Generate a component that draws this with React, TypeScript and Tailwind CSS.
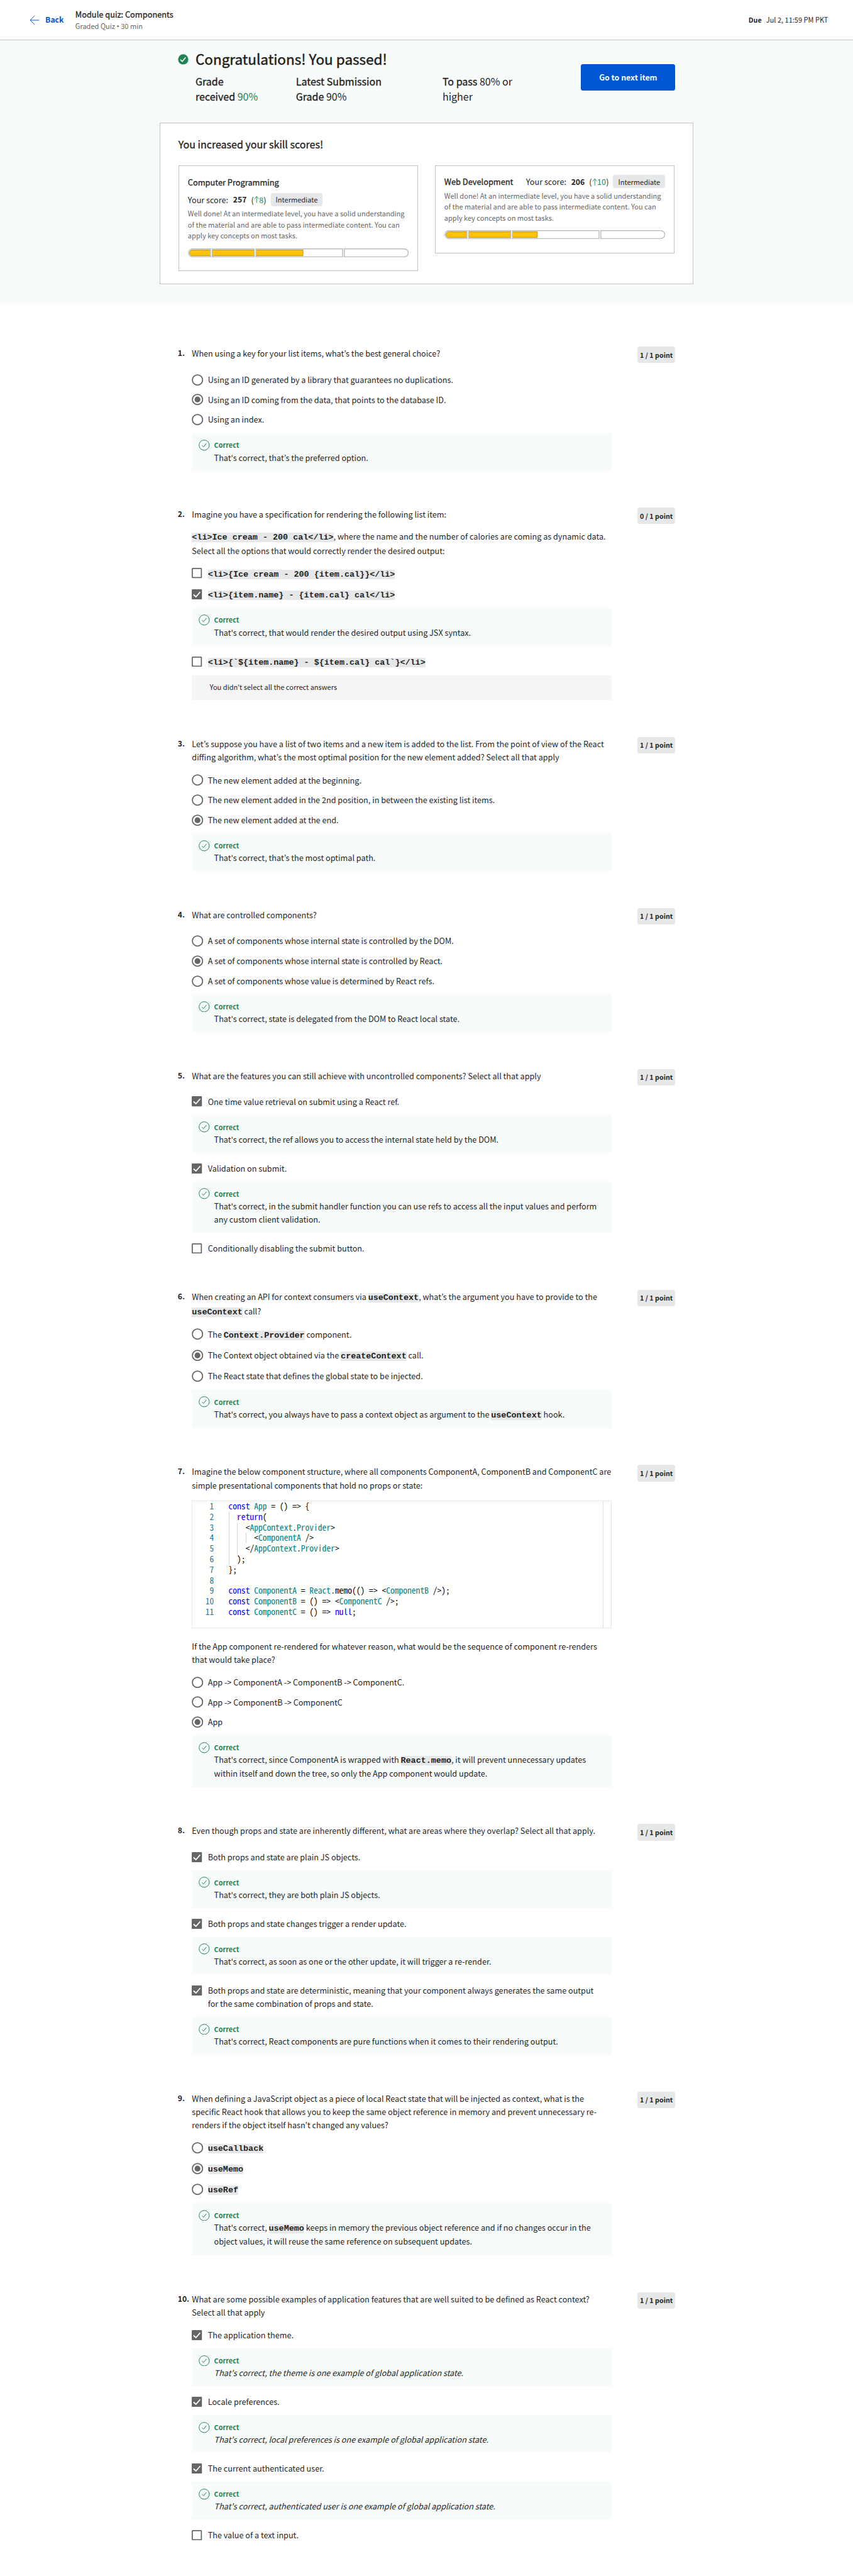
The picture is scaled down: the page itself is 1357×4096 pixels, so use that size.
import type { ReactNode } from "react";

/* The whole page is sized in rem, so one root size scales it. */
const ROOT_SIZE = "html{font-size:14.135px}";

function Code({ children }: { children: ReactNode }) {
  return (
    <code className="bg-[#e5e7e8] font-['Liberation_Mono',monospace] text-[0.949rem] leading-none font-bold whitespace-pre">
      {children}
    </code>
  );
}

/* ---------- header ---------- */

function Header() {
  return (
    <header className="flex h-[4.55rem] items-center border-b border-[#c1c1c1] bg-white pr-[2.8rem] pl-[3.35rem] whitespace-nowrap">
      <svg className="h-4 w-[1.1rem] shrink-0" viewBox="0 0 22 20" fill="none" stroke="#0056d2" strokeWidth="1.4">
        <path d="M11 0.5 1.5 10 11 19.5M1.5 10H21.5" />
      </svg>
      <span className="ml-[0.65rem] text-[0.864rem] font-bold text-[#0056d2]">Back</span>
      <div className="ml-[1.3rem]">
        <div className="text-[0.906rem] leading-[1.35rem] [-webkit-text-stroke:0.3px]">Module quiz: Components</div>
        <div className="text-[0.783rem] leading-[1.35rem] text-[#666]">
          Graded Quiz <span className="font-['Noto_Sans'] leading-none">•</span> 30 min
        </div>
      </div>
      <div className="ml-auto text-[0.78rem]">
        <span className="mr-[0.5rem] text-[0.765rem] font-bold">Due</span>Jul 2, 11:59 PM PKT
      </div>
    </header>
  );
}

/* ---------- result banner ---------- */

function SkillBar({ value }: { value: number }) {
  return (
    <svg className="mt-3 block h-4 w-full" viewBox="0 0 497 20" fill="none">
      <path
        d={`M10 3.5H${value}V16.5H10A6.5 6.5 0 0 1 10 3.5Z`}
        fill="#ffc300"
        stroke="#94731b"
        strokeWidth="1"
      />
      <path d="M52.500 0V20M151 0V20M350 0V20" stroke="#fff" strokeWidth="4" />
      <g stroke="#bdbdbd" strokeWidth="2">
        <path d="M50.500 1H10A9 9 0 0 0 10 19H50.500Z" />
        <path d="M54.500 1H149V19H54.500Z" />
        <path d="M153 1H348V19H153Z" />
        <path d="M352 1H487A9 9 0 0 1 487 19H352Z" />
      </g>
    </svg>
  );
}

function Score({ score, gain }: { score: number; gain: number }) {
  return (
    <div className="flex h-6 items-center whitespace-nowrap">
      <span className="text-[0.895rem]">Your score:</span>
      <span className="ml-[0.55rem] text-[0.864rem] font-bold">{score}</span>
      <span className="ml-[0.5rem] flex items-center text-[0.895rem]">
        (
        <span className="flex items-center text-[#1f8354]">
          <svg className="h-3.5 w-[0.6rem]" viewBox="0 0 12 18" fill="none" stroke="currentColor" strokeWidth="1.3">
            <path d="M1 8 6 2 11 8M6 2V17" />
          </svg>
          {gain}
        </span>
        )
      </span>
      <span className="ml-[0.5rem] flex h-6 w-[5.85rem] items-center justify-center rounded-[0.25rem] bg-[#e5e7e8] text-[0.783rem]">
        Intermediate
      </span>
    </div>
  );
}

function SkillCard({ name, stacked, score, gain, value }: { name: string; stacked?: boolean; score: number; gain: number; value: number }) {
  return (
    <div className={stacked ? "w-108 border border-[#c1c1c1] px-4 pt-[1.05rem] pb-6" : "w-108 border border-[#c1c1c1] px-4 pt-4 pb-6"}>
      <div className={stacked ? "flex flex-col gap-[0.45rem]" : "flex items-center justify-between"}>
        <h3 className="text-[0.906rem] leading-6 whitespace-nowrap [-webkit-text-stroke:0.3px]">{name}</h3>
        <Score score={score} gain={gain} />
      </div>
      <p className="mt-[0.23rem] text-[0.783rem] leading-5 whitespace-nowrap text-[#666]">
        Well done! At an intermediate level, you have a solid understanding
        <br />
        of the material and are able to pass intermediate content. You can
        <br />
        apply key concepts on most tasks.
      </p>
      <SkillBar value={value} />
    </div>
  );
}

function Banner() {
  return (
    <section className="h-[29.45rem] bg-[#f7fbf9]">
      <div className="mx-auto w-[60rem]">
        <div className="flex h-[9.25rem] items-start px-8">
          <svg className="mt-[1.55rem] size-[1.2rem] shrink-0" viewBox="0 0 24 24" fill="none">
            <circle cx="12" cy="12" r="11.500" fill="#1f8354" />
            <path d="M5.500 12.500 10 16.500 17.500 7.500" stroke="#fff" strokeWidth="2.200" />
          </svg>
          <div className="ml-[0.8rem] whitespace-nowrap">
            <h1 className="mt-[1.15rem] text-[1.592rem] leading-[1.8rem] [-webkit-text-stroke:0.5px]">
              Congratulations! You passed!
            </h1>
            <div className="mt-[0.75rem] flex text-[1.135rem] leading-7">
              <div className="w-[11.3rem]">
                <span className="[-webkit-text-stroke:0.35px]">Grade<br />received</span>{" "}
                <span className="text-[#1f8354]">90%</span>
              </div>
              <div className="w-[16.5rem]">
                <span className="[-webkit-text-stroke:0.35px]">Latest Submission<br />Grade</span> 90%
              </div>
              <div>
                <span className="[-webkit-text-stroke:0.35px]">To pass</span> 80% or
                <br />
                higher
              </div>
            </div>
          </div>
          <button className="mt-[2.65rem] ml-auto h-12 w-[10.6rem] rounded-[0.25rem] bg-[#0056d2] text-[0.877rem] font-bold text-white">
            Go to next item
          </button>
        </div>
        <div className="h-[18.2rem] border border-[#c1c1c1] bg-white px-8 pt-[1.5rem]">
          <h2 className="text-[1.135rem] leading-7 [-webkit-text-stroke:0.35px]">You increased your skill scores!</h2>
          <div className="mt-[1.5rem] flex items-start justify-between">
            <SkillCard name="Computer Programming" stacked score={257} gain={8} value={259} />
            <SkillCard name="Web Development" score={206} gain={10} value={209} />
          </div>
        </div>
      </div>
    </section>
  );
}

/* ---------- quiz parts ---------- */

type Kind = "radio" | "check";

function Mark({ kind, on }: { kind: Kind; on?: boolean }) {
  if (kind === "radio") {
    return (
      <svg className="-ml-[0.05rem] size-[1.3rem] shrink-0" viewBox="0 0 26 26" fill="none">
        <circle cx="13" cy="13" r="11.500" stroke="#666" strokeWidth="2.500" />
        {on && <circle cx="13" cy="13" r="6.500" fill="#666" />}
      </svg>
    );
  }
  return (
    <svg className="size-[1.15rem] shrink-0" viewBox="0 0 23 23" fill="none">
      {on ? (
        <>
          <rect width="23" height="23" rx="2" fill="#666" />
          <path d="M4 12 9.500 17 19 6" stroke="#fff" strokeWidth="2.500" />
        </>
      ) : (
        <rect x="1.250" y="1.250" width="20.500" height="20.500" rx="1" stroke="#666" strokeWidth="2.500" />
      )}
    </svg>
  );
}

function Option({ kind, on, tall, children }: { kind: Kind; on?: boolean; tall?: boolean; children: ReactNode }) {
  return (
    <div className={tall ? "flex h-[2.35rem] items-center" : "flex h-[2.25rem] items-center"}>
      <span className="flex w-[1.8rem] shrink-0 items-center">
        <Mark kind={kind} on={on} />
      </span>
      <span className="pb-[0.06rem] leading-6">{children}</span>
    </div>
  );
}

function Feedback({ children }: { children: ReactNode }) {
  return (
    <div className="mt-[0.37rem] flex bg-[#f7fbf9] pt-[0.7rem] pb-[0.77rem] pl-[0.75rem]">
      <svg className="mt-[0.05rem] size-[1.25rem] shrink-0" viewBox="0 0 25 25" fill="none" stroke="#1f8354">
        <circle cx="12.500" cy="12.500" r="11.500" strokeWidth="1.400" />
        <path d="M7.500 13 11 16.500 17.500 8.500" strokeWidth="1.400" />
      </svg>
      <div className="ml-2">
        <div className="h-[1.28rem] text-[0.768rem] leading-[1.28rem] font-bold text-[#1f8354]">Correct</div>
        <div>{children}</div>
      </div>
    </div>
  );
}

function Question({ n, height, points = "1 / 1 point", prompt, children }: { n: number; height: string; points?: string; prompt: ReactNode; children: ReactNode }) {
  return (
    <section className={`ml-80 flex items-start text-[0.895rem] leading-6 whitespace-nowrap ${height}`}>
      <span className="w-[1.6rem] shrink-0 text-[0.864rem] font-bold">{n}.</span>
      <div className="w-[47.25rem] shrink-0">
        <div className="min-h-[1.85rem]">{prompt}</div>
        {children}
      </div>
      <span className="ml-[2.9rem] flex h-[1.85rem] w-17 shrink-0 items-center justify-center rounded-[0.25rem] bg-[#e5e7e8] text-[0.758rem] font-bold">
        {points}
      </span>
    </section>
  );
}

/* ---------- read-only code listing ---------- */

const K = ({ children }: { children: ReactNode }) => <span className="text-[#0000ff]">{children}</span>;
const N = ({ children }: { children: ReactNode }) => <span className="text-[#008080]">{children}</span>;

const LISTING: { depth: number; code: ReactNode }[] = [
  { depth: 0, code: <><K>const</K> <N>App</N> = () =&gt; {"{"}</> },
  { depth: 1, code: <><K>return</K>(</> },
  { depth: 2, code: <>&lt;<N>AppContext</N>.<N>Provider</N>&gt;</> },
  { depth: 3, code: <>&lt;<N>ComponentA</N> /&gt;</> },
  { depth: 2, code: <>&lt;/<N>AppContext</N>.<N>Provider</N>&gt;</> },
  { depth: 1, code: <>);</> },
  { depth: 0, code: <>{"};"}</> },
  { depth: 0, code: <></> },
  { depth: 0, code: <><K>const</K> <N>ComponentA</N> = <N>React</N>.memo(() =&gt; &lt;<N>ComponentB</N> /&gt;);</> },
  { depth: 0, code: <><K>const</K> <N>ComponentB</N> = () =&gt; &lt;<N>ComponentC</N> /&gt;;</> },
  { depth: 0, code: <><K>const</K> <N>ComponentC</N> = () =&gt; <K>null</K>;</> },
];

function Listing() {
  return (
    <div className="mt-4 flex h-[14.35rem] border border-[#e5e7e8] bg-[#fffffe] font-['Noto_Sans_Mono_CJK_SC','Liberation_Mono',monospace] text-[0.96rem] leading-[1.19rem] text-black">
      <div className="flex-1">
        {LISTING.map((line, i) => (
          <div key={i} className="flex h-[1.19rem] leading-[1.13rem] whitespace-pre">
            <span className="w-[2.4rem] shrink-0 text-right text-[#237893]">{i + 1}</span>
            <span className="w-[1.65rem] shrink-0" />
            {Array.from({ length: line.depth }, (_, d) => (
              <span key={d} className="w-[0.96rem] shrink-0 border-l border-[#d3d3d3]" />
            ))}
            <span>{line.code}</span>
          </div>
        ))}
      </div>
      <div className="w-[0.95rem] border-l border-[#e0e0e0]" />
    </div>
  );
}

/* ---------- page ---------- */

export default function App() {
  return (
    <div className="w-full overflow-hidden bg-white font-['Noto_Sans_CJK_KR','Noto_Sans',sans-serif] text-[#1f1f1f]">
      <style>{ROOT_SIZE}</style>
      <Header />
      <Banner />
      <main className="pt-20">
        <Question n={1} height="h-[18.1rem]" prompt="When using a key for your list items, what’s the best general choice?">
          <div className="mt-3">
            <Option kind="radio">Using an ID generated by a library that guarantees no duplications.</Option>
            <Option kind="radio" on>Using an ID coming from the data, that points to the database ID.</Option>
            <Option kind="radio">Using an index.</Option>
            <Feedback>That's correct, that’s the preferred option.</Feedback>
          </div>
        </Question>

        <Question
          n={2}
          height="h-[25.8rem]"
          points="0 / 1 point"
          prompt={
            <>
              <p>Imagine you have a specification for rendering the following list item:</p>
              <p className="mt-[0.97rem] leading-[1.6rem]">
                <Code>{"<li>Ice cream - 200 cal</li>"}</Code>, where the name and the number of calories are coming as dynamic data.
                <br />
                Select all the options that would correctly render the desired output:
              </p>
            </>
          }
        >
          <div className="mt-[0.55rem]">
            <Option kind="check" tall><Code>{"<li>{Ice cream - 200 {item.cal}}</li>"}</Code></Option>
            <Option kind="check" on tall><Code>{"<li>{item.name} - {item.cal} cal</li>"}</Code></Option>
            <Feedback>That's correct, that would render the desired output using JSX syntax.</Feedback>
          </div>
          <div className="mt-[0.6rem]">
            <Option kind="check" tall><Code>{"<li>{`${item.name} - ${item.cal} cal`}</li>"}</Code></Option>
            <div className="mt-[0.4rem] bg-[#f5f5f5] pb-[0.1rem] pl-[2rem] text-[0.783rem] leading-[2.65rem]">
              You didn’t select all the correct answers
            </div>
          </div>
        </Question>

        <Question
          n={3}
          height="h-[19.25rem]"
          prompt={
            <>
              Let’s suppose you have a list of two items and a new item is added to the list. From the point of view of the React
              <br />
              diffing algorithm, what’s the most optimal position for the new element added? Select all that apply
            </>
          }
        >
          <div className="mt-3">
            <Option kind="radio">The new element added at the beginning.</Option>
            <Option kind="radio">The new element added in the 2nd position, in between the existing list items.</Option>
            <Option kind="radio" on>The new element added at the end.</Option>
            <Feedback>That's correct, that’s the most optimal path.</Feedback>
          </div>
        </Question>

        <Question n={4} height="h-[18.1rem]" prompt="What are controlled components?">
          <div className="mt-3">
            <Option kind="radio">A set of components whose internal state is controlled by the DOM.</Option>
            <Option kind="radio" on>A set of components whose internal state is controlled by React.</Option>
            <Option kind="radio">A set of components whose value is determined by React refs.</Option>
            <Feedback>That's correct, state is delegated from the DOM to React local state.</Feedback>
          </div>
        </Question>

        <Question
          n={5}
          height="h-[24.85rem]"
          prompt="What are the features you can still achieve with uncontrolled components? Select all that apply"
        >
          <div className="mt-[0.7rem] space-y-[0.64rem]">
            <div>
              <Option kind="check" on>One time value retrieval on submit using a React ref.</Option>
              <Feedback>That's correct, the ref allows you to access the internal state held by the DOM.</Feedback>
            </div>
            <div>
              <Option kind="check" on>Validation on submit.</Option>
              <Feedback>
                That's correct, in the submit handler function you can use refs to access all the input values and perform
                <br />
                any custom client validation.
              </Feedback>
            </div>
            <Option kind="check">Conditionally disabling the submit button.</Option>
          </div>
        </Question>

        <Question
          n={6}
          height="h-[19.7rem]"
          prompt={
            <p className="leading-[1.6rem]">
              When creating an API for context consumers via <Code>useContext</Code>, what’s the argument you have to provide to the
              <br />
              <Code>useContext</Code> call?
            </p>
          }
        >
          <div className="mt-[0.63rem]">
            <Option kind="radio" tall>The <Code>Context.Provider</Code> component.</Option>
            <Option kind="radio" on tall>The Context object obtained via the <Code>createContext</Code> call.</Option>
            <Option kind="radio" tall>The React state that defines the global state to be injected.</Option>
            <Feedback>
              <p className="leading-[1.56rem]">
                That's correct, you always have to pass a context object as argument to the <Code>useContext</Code> hook.
              </p>
            </Feedback>
          </div>
        </Question>

        <Question
          n={7}
          height="h-[40.4rem]"
          prompt={
            <>
              Imagine the below component structure, where all components ComponentA, ComponentB and ComponentC are
              <br />
              simple presentational components that hold no props or state:
              <Listing />
              <p className="mt-[1.28rem]">
                If the App component re-rendered for whatever reason, what would be the sequence of component re-renders
                <br />
                that would take place?
              </p>
            </>
          }
        >
          <div className="mt-[0.68rem]">
            <Option kind="radio">App -&gt; ComponentA -&gt; ComponentB -&gt; ComponentC.</Option>
            <Option kind="radio">App -&gt; ComponentB -&gt; ComponentC</Option>
            <Option kind="radio" on>App</Option>
            <Feedback>
              <p className="leading-[1.56rem]">
                That's correct, since ComponentA is wrapped with <Code>React.memo</Code>, it will prevent unnecessary updates
                <br />
                within itself and down the tree, so only the App component would update.
              </p>
            </Feedback>
          </div>
        </Question>

        <Question
          n={8}
          height="h-[30.1rem]"
          prompt="Even though props and state are inherently different, what are areas where they overlap? Select all that apply."
        >
          <div className="mt-[0.72rem] space-y-[0.64rem]">
            <div>
              <Option kind="check" on>Both props and state are plain JS objects.</Option>
              <Feedback>That's correct, they are both plain JS objects.</Feedback>
            </div>
            <div>
              <Option kind="check" on>Both props and state changes trigger a render update.</Option>
              <Feedback>That's correct, as soon as one or the other update, it will trigger a re-render.</Feedback>
            </div>
            <div>
              <Option kind="check" on>Both props and state are deterministic, meaning that your component always generates the same output</Option>
              <p className="-mt-[0.4rem] mb-[0.76rem] ml-[1.8rem]">for the same combination of props and state.</p>
              <Feedback>That's correct, React components are pure functions when it comes to their rendering output.</Feedback>
            </div>
          </div>
        </Question>

        <Question
          n={9}
          height="h-[22.55rem]"
          prompt={
            <>
              When defining a JavaScript object as a piece of local React state that will be injected as context, what is the
              <br />
              specific React hook that allows you to keep the same object reference in memory and prevent unnecessary re-
              <br />
              renders if the object itself hasn’t changed any values?
            </>
          }
        >
          <div className="mt-[0.63rem]">
            <Option kind="radio" tall><Code>useCallback</Code></Option>
            <Option kind="radio" on tall><Code>useMemo</Code></Option>
            <Option kind="radio" tall><Code>useRef</Code></Option>
            <Feedback>
              <p className="leading-[1.56rem]">
                That's correct, <Code>useMemo</Code> keeps in memory the previous object reference and if no changes occur in the
                <br />
                object values, it will reuse the same reference on subsequent updates.
              </p>
            </Feedback>
          </div>
        </Question>

        <Question
          n={10}
          height="h-[31.9rem]"
          prompt={
            <>
              What are some possible examples of application features that are well suited to be defined as React context?
              <br />
              Select all that apply
            </>
          }
        >
          <div className="mt-[0.72rem] space-y-[0.64rem]">
            <div>
              <Option kind="check" on>The application theme.</Option>
              <Feedback><em>That's correct, the theme is one example of global application state.</em></Feedback>
            </div>
            <div>
              <Option kind="check" on>Locale preferences.</Option>
              <Feedback><em>That's correct, local preferences is one example of global application state.</em></Feedback>
            </div>
            <div>
              <Option kind="check" on>The current authenticated user.</Option>
              <Feedback><em>That's correct, authenticated user is one example of global application state.</em></Feedback>
            </div>
            <Option kind="check">The value of a text input.</Option>
          </div>
        </Question>
      </main>
    </div>
  );
}
